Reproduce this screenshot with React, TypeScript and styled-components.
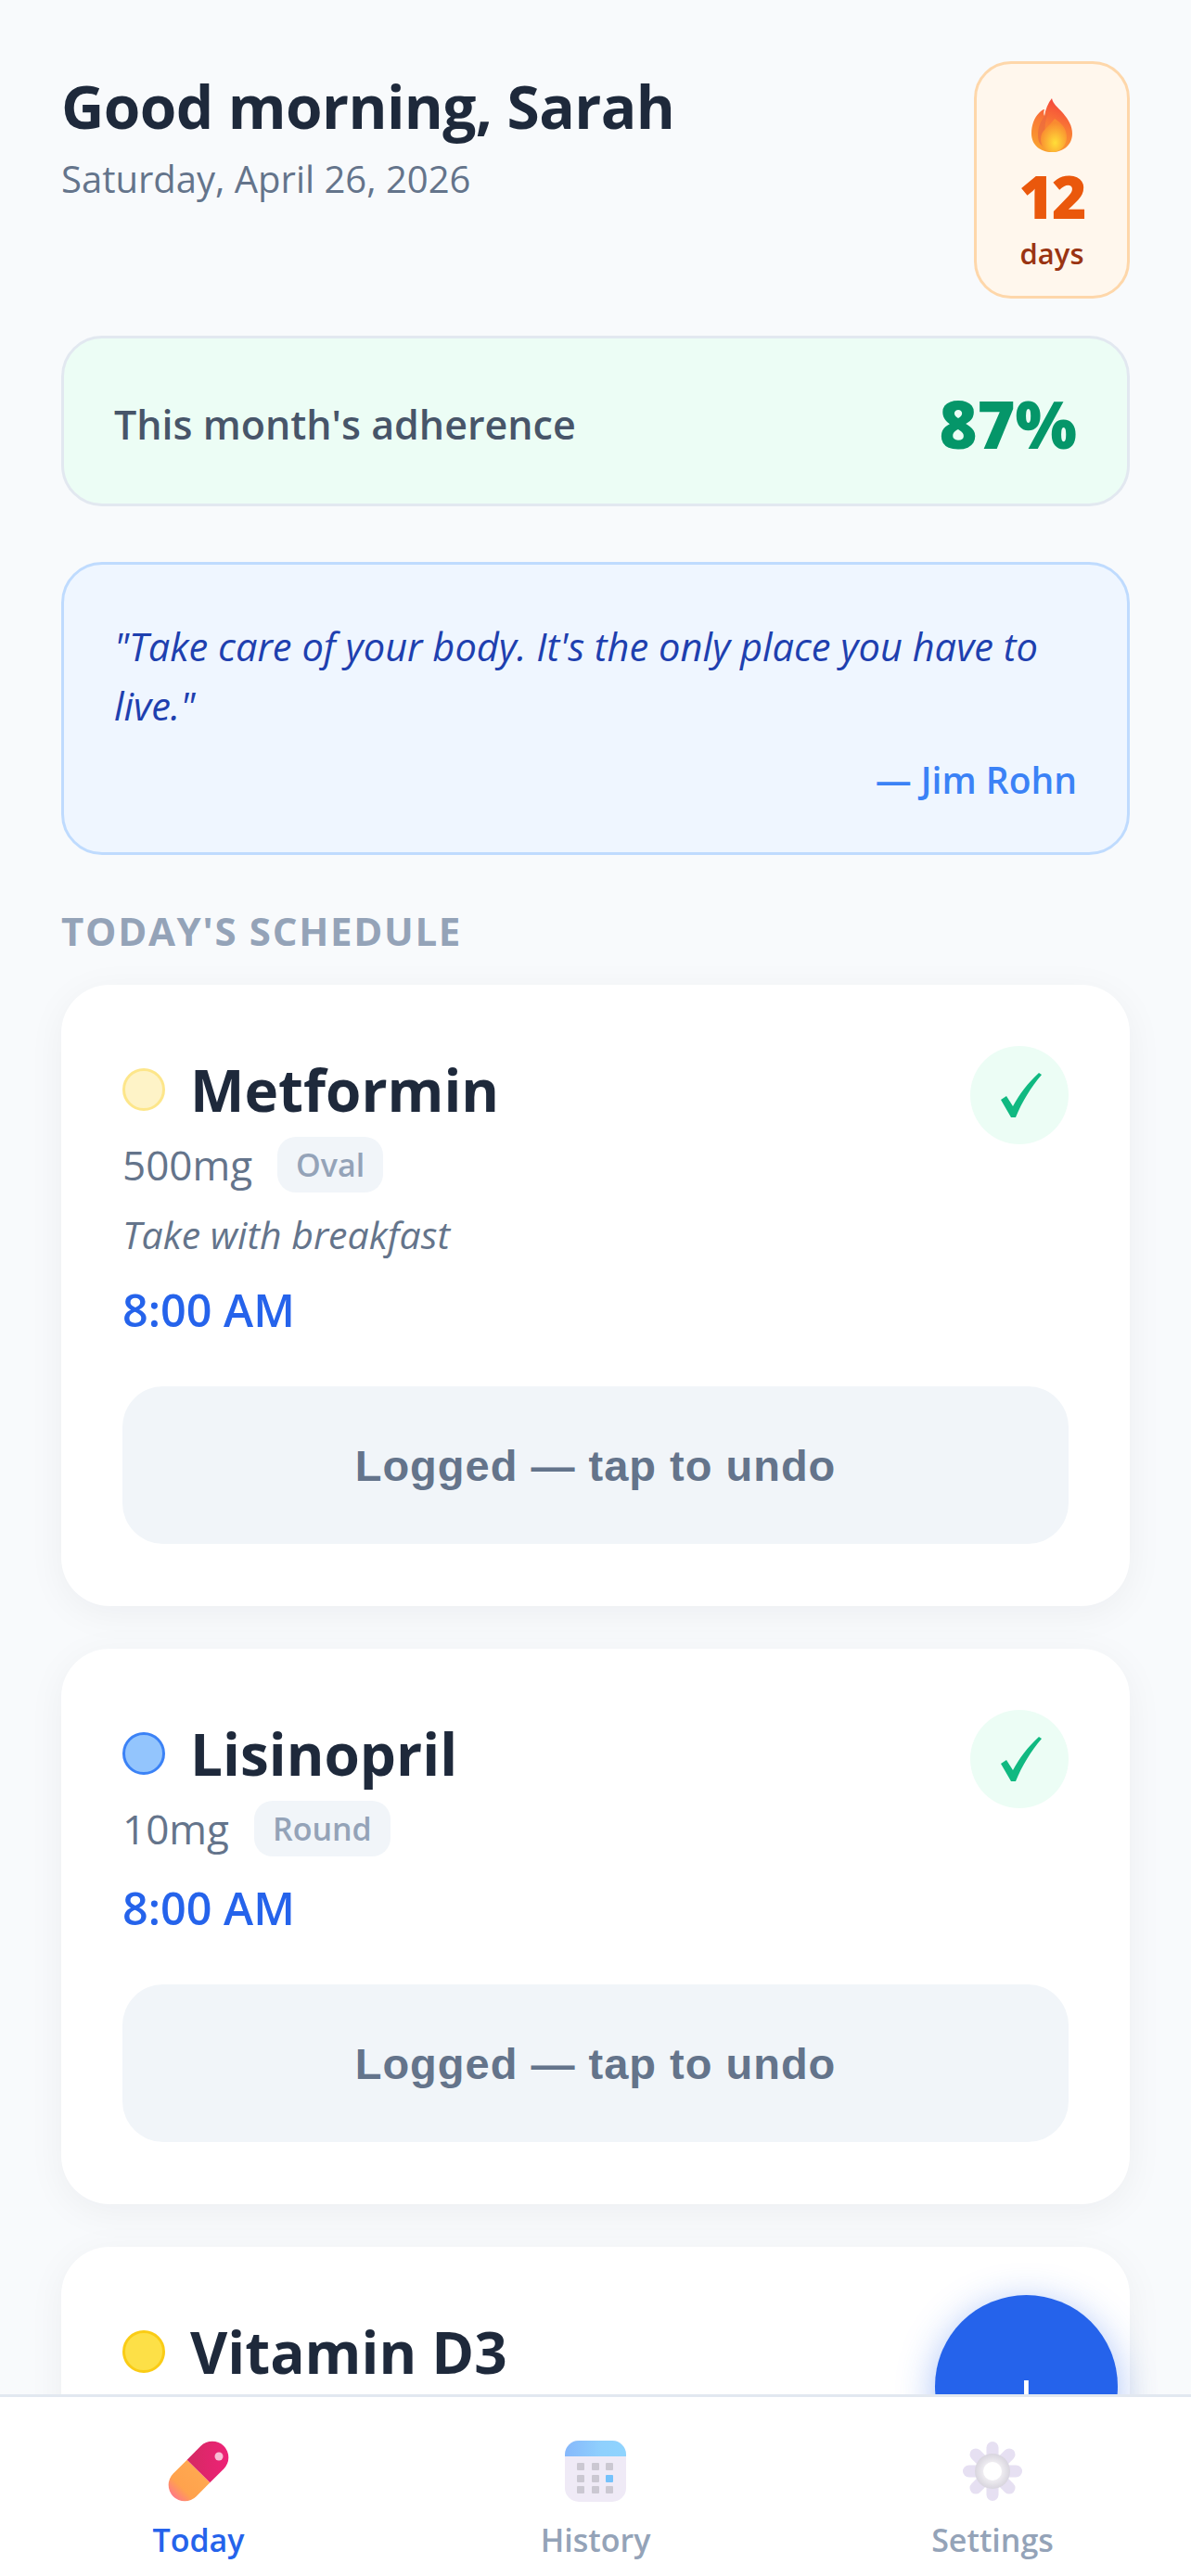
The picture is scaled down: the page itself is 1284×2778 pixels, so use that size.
import React from 'react';
import styled, { createGlobalStyle } from 'styled-components';

const GlobalStyle = createGlobalStyle`
  html, body {
    margin: 0;
    padding: 0;
    background: #f8fafc;
  }
  * {
    box-sizing: border-box;
  }
`;

const Screen = styled.main`
  display: flex;
  flex-direction: column;
  height: 100vh;
  overflow: hidden;
  font-family: 'Open Sans', 'Noto Sans', sans-serif;
  background: #f8fafc;
`;

const Content = styled.div`
  position: relative;
  flex: 1;
  min-height: 0;
  overflow: hidden;
  padding: 66px 66px 0;
`;

const Header = styled.header`
  display: flex;
  justify-content: space-between;
  align-items: flex-start;
  margin-bottom: 40px;
`;

const Greeting = styled.div`
  padding-top: 7px;
`;

const Title = styled.h1`
  margin: 0;
  font-size: 64px;
  line-height: 84px;
  font-weight: 700;
  color: #1e293b;
  letter-spacing: -0.6px;
`;

const DateLine = styled.p`
  margin: 9px 0 0;
  font-size: 40px;
  line-height: 54px;
  color: #64748b;
`;

const Streak = styled.div`
  width: 168px;
  height: 256px;
  display: flex;
  flex-direction: column;
  align-items: center;
  padding-top: 36px;
  background: #fff7ed;
  border: 3px solid #fed7aa;
  border-radius: 40px;
`;

const StreakCount = styled.div`
  font-size: 64px;
  line-height: 70px;
  font-weight: 800;
  letter-spacing: -2px;
  color: #ea580c;
  margin-top: 12px;
`;

const StreakLabel = styled.div`
  font-size: 31px;
  line-height: 42px;
  font-weight: 600;
  color: #9a3412;
  margin-top: 5px;
`;

const Adherence = styled.section`
  height: 184px;
  display: flex;
  justify-content: space-between;
  align-items: center;
  padding: 6px 54px 0;
  background: #ecfdf5;
  border: 3px solid #e2e8f0;
  border-radius: 44px;
  margin-bottom: 60px;
`;

const AdherenceLabel = styled.span`
  font-size: 43px;
  font-weight: 600;
  color: #475569;
`;

const AdherenceValue = styled.span`
  font-size: 70px;
  font-weight: 800;
  color: #059669;
`;

const Quote = styled.section`
  height: 316px;
  padding: 56px 54px 0;
  background: #eff6ff;
  border: 3px solid #bfdbfe;
  border-radius: 44px;
  margin-bottom: 55px;
`;

const QuoteText = styled.p`
  margin: 0;
  font-size: 41.6px;
  line-height: 64px;
  font-style: italic;
  color: #1e40af;
`;

const QuoteAuthor = styled.p`
  margin: 22px 0 0;
  text-align: right;
  font-size: 39px;
  line-height: 52px;
  font-weight: 600;
  color: #3b82f6;
`;

const SectionTitle = styled.h2`
  margin: 0 0 31px;
  font-size: 42px;
  line-height: 54px;
  font-weight: 700;
  letter-spacing: 1.7px;
  text-transform: uppercase;
  color: #94a3b8;
`;

const Card = styled.article`
  position: relative;
  padding: 66px 66px 67px;
  background: #ffffff;
  border-radius: 52px;
  box-shadow: 0 8px 40px rgba(15, 23, 42, 0.05);
  margin-bottom: 46px;
`;

const NameRow = styled.div`
  display: flex;
  align-items: center;
  gap: 27px;
  margin-top: 3px;
`;

const Dot = styled.span<{ $fill: string; $edge: string }>`
  width: 46px;
  height: 46px;
  border-radius: 50%;
  background: ${(p) => p.$fill};
  border: 3px solid ${(p) => p.$edge};
`;

const Name = styled.h3`
  margin: 0;
  font-size: 62px;
  line-height: 88px;
  font-weight: 700;
  color: #1e293b;
`;

const DoseRow = styled.div`
  display: flex;
  align-items: center;
  gap: 27px;
  margin-top: 7px;
`;

const Dose = styled.span`
  font-size: 44px;
  line-height: 60px;
  color: #64748b;
`;

const Shape = styled.span`
  padding: 0 20px;
  font-size: 34px;
  line-height: 60px;
  font-weight: 600;
  color: #94a3b8;
  background: #f1f5f9;
  border-radius: 20px;
`;

const Note = styled.p`
  margin: 19px 0 0;
  font-size: 41px;
  line-height: 52px;
  font-style: italic;
  color: #64748b;
`;

const Time = styled.p`
  margin: 22px 0 0;
  font-size: 48.5px;
  line-height: 66px;
  font-weight: 600;
  color: #2563eb;
`;

const UndoButton = styled.button`
  display: block;
  width: 100%;
  height: 170px;
  margin-top: 50px;
  border: none;
  border-radius: 44px;
  background: #f1f5f9;
  color: #64748b;
  font-family: 'Liberation Sans', Arial, sans-serif;
  font-size: 47px;
  font-weight: 700;
  letter-spacing: 1px;
`;

const CheckBadge = styled.div`
  position: absolute;
  top: 66px;
  right: 66px;
  width: 106px;
  height: 106px;
  display: flex;
  align-items: center;
  justify-content: center;
  padding-left: 3px;
  border-radius: 50%;
  background: #ecfdf5;
`;

const Fab = styled.button`
  position: absolute;
  left: 1008px;
  top: 2475px;
  width: 197px;
  height: 197px;
  padding: 33px 0 0;
  border: none;
  border-radius: 50%;
  background: #2563eb;
  box-shadow: 0 8px 40px rgba(37, 99, 235, 0.4);
  color: #ffffff;
  font-family: 'Open Sans', sans-serif;
  font-size: 112px;
  font-weight: 300;
  line-height: 1;
`;

const Nav = styled.nav`
  position: relative;
  flex: none;
  height: 196px;
  display: grid;
  grid-template-columns: repeat(3, 1fr);
  padding-top: 47px;
  background: #ffffff;
  border-top: 3px solid #e2e8f0;
`;

const NavItem = styled.div<{ $active?: boolean }>`
  display: flex;
  flex-direction: column;
  align-items: center;
  font-size: 34px;
  line-height: 50px;
  font-weight: 600;
  gap: 16px;
  color: ${(p) => (p.$active ? '#2563eb' : '#94a3b8')};
`;

const FlameIcon = () => (
  <svg width="48" height="60" viewBox="0 0 48 60">
    <defs>
      <linearGradient id="flameOuter" x1="0.7" y1="0" x2="0.4" y2="1">
        <stop offset="0" stopColor="#f4403c" />
        <stop offset="0.5" stopColor="#f97a35" />
        <stop offset="1" stopColor="#f9a030" />
      </linearGradient>
      <radialGradient id="flameInner" cx="0.55" cy="0.72" r="0.6">
        <stop offset="0" stopColor="#ffde38" />
        <stop offset="1" stopColor="#f98a30" />
      </radialGradient>
    </defs>
    <path
      d="M24 1c1 6 6 9 12 16 6 7 10 14 10 22 0 12-9 20-22 20S2 51 2 39c0-9 3-17 8-22 2-2 4-4 6-4-1 3-1 5 0 7 1-7 4-14 8-19z"
      fill="url(#flameOuter)"
    />
    <path d="M10 48c-3-12 1-24 10-31-4 9-5 20 0 38-4-1-8-3-10-7z" fill="#e8653f" opacity="0.6" />
    <path
      d="M27 23c8 5 13 11 13 20 0 9-7 16-15 16-8 0-13-6-13-14 0-10 9-13 15-22z"
      fill="url(#flameInner)"
    />
  </svg>
);

const PillIcon = () => (
  <svg width="66" height="66" viewBox="0 0 66 66">
    <defs>
      <linearGradient id="pillA" x1="0" y1="0.5" x2="1" y2="0.5">
        <stop offset="0" stopColor="#ff7a85" />
        <stop offset="0.35" stopColor="#ffa24d" />
        <stop offset="1" stopColor="#ffa850" />
      </linearGradient>
      <linearGradient id="pillB" x1="0" y1="0" x2="1" y2="1">
        <stop offset="0" stopColor="#d42a62" />
        <stop offset="1" stopColor="#f2207a" />
      </linearGradient>
    </defs>
    <g transform="rotate(-45 33 33)">
      <path d="M33 15.5H12a17.5 17.5 0 0 0 0 35h21z" fill="url(#pillA)" />
      <path d="M33 15.5h21a17.5 17.5 0 0 1 0 35H33z" fill="url(#pillB)" />
    </g>
    <circle cx="55" cy="17" r="4.5" fill="#ffffff" opacity="0.7" />
  </svg>
);

const CalendarIcon = () => (
  <svg width="66" height="66" viewBox="0 0 66 66">
    <defs>
      <linearGradient id="calTop" x1="0" y1="0" x2="1" y2="0">
        <stop offset="0" stopColor="#86b8fb" />
        <stop offset="0.6" stopColor="#8fd0fd" />
        <stop offset="1" stopColor="#8fd4fe" />
      </linearGradient>
    </defs>
    <rect x="0" y="0" width="66" height="66" rx="15" fill="#efeaf6" />
    <path d="M15 0h36a15 15 0 0 1 15 15v2H0v-2A15 15 0 0 1 15 0z" fill="url(#calTop)" />
    {[24, 37, 49].map((y) =>
      [13, 29, 44].map((x) => (
        <rect
          key={`${x}-${y}`}
          x={x}
          y={y}
          width="8"
          height="8"
          rx="1"
          fill={x === 44 && y === 37 ? '#76c2fb' : '#cbc8d2'}
        />
      )),
    )}
  </svg>
);

const GearIcon = () => (
  <svg width="66" height="66" viewBox="0 0 66 66">
    <defs>
      <radialGradient id="gearRing" cx="0.5" cy="0.5" r="0.5">
        <stop offset="0.45" stopColor="#f2f0f4" />
        <stop offset="1" stopColor="#d8d5de" />
      </radialGradient>
    </defs>
    {[0, 45, 90, 135, 180, 225, 270, 315].map((a) => (
      <rect
        key={a}
        x="26.5"
        y="1"
        width="13"
        height="26"
        rx="6.5"
        fill="#e6e0f2"
        transform={`rotate(${a} 33 33)`}
      />
    ))}
    <circle cx="33" cy="33" r="19" fill="url(#gearRing)" />
    <circle cx="33" cy="33" r="10" fill="#ffffff" />
  </svg>
);

const CheckMark = () => (
  <svg width="50" height="50" viewBox="0 0 50 50">
    <path
      d="M3 30 L9 26 L16 37 C23 24 32 12 44 1 L47 3 C35 17 26 32 19 49 L14 49 Z"
      fill="#10b981"
    />
  </svg>
);

interface Med {
  name: string;
  dose: string;
  shape: string;
  note?: string;
  fill: string;
  edge: string;
}

const meds: Med[] = [
  { name: 'Metformin', dose: '500mg', shape: 'Oval', note: 'Take with breakfast', fill: '#fef3c7', edge: '#fde68a' },
  { name: 'Lisinopril', dose: '10mg', shape: 'Round', fill: '#93c5fd', edge: '#3b82f6' },
];

const App = () => {
  return (
    <>
      <GlobalStyle />
      <Screen>
        <Content>
          <Header>
            <Greeting>
              <Title>Good morning, Sarah</Title>
              <DateLine>Saturday, April 26, 2026</DateLine>
            </Greeting>
            <Streak>
              <FlameIcon />
              <StreakCount>12</StreakCount>
              <StreakLabel>days</StreakLabel>
            </Streak>
          </Header>
          <Adherence>
            <AdherenceLabel>This month's adherence</AdherenceLabel>
            <AdherenceValue>87%</AdherenceValue>
          </Adherence>
          <Quote>
            <QuoteText>"Take care of your body. It's the only place you have to live."</QuoteText>
            <QuoteAuthor>— Jim Rohn</QuoteAuthor>
          </Quote>
          <SectionTitle>Today's Schedule</SectionTitle>
          {meds.map((med) => (
            <Card key={med.name}>
              <NameRow>
                <Dot $fill={med.fill} $edge={med.edge} />
                <Name>{med.name}</Name>
              </NameRow>
              <DoseRow>
                <Dose>{med.dose}</Dose>
                <Shape>{med.shape}</Shape>
              </DoseRow>
              {med.note && <Note>{med.note}</Note>}
              <Time>8:00 AM</Time>
              <UndoButton>Logged — tap to undo</UndoButton>
              <CheckBadge>
                <CheckMark />
              </CheckBadge>
            </Card>
          ))}
          <Card>
            <NameRow>
              <Dot $fill="#fde047" $edge="#facc15" />
              <Name>Vitamin D3</Name>
            </NameRow>
          </Card>
          <Fab>+</Fab>
        </Content>
        <Nav>
          <NavItem $active>
            <PillIcon />
            Today
          </NavItem>
          <NavItem>
            <CalendarIcon />
            History
          </NavItem>
          <NavItem>
            <GearIcon />
            Settings
          </NavItem>
        </Nav>
      </Screen>
    </>
  );
};

export default App;
